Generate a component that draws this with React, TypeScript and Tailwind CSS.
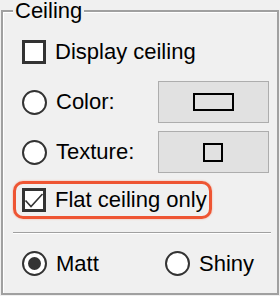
import React from 'react';

const font = "font-['Liberation_Sans',Arial,sans-serif]";

const CheckBox: React.FC<{ checked?: boolean }> = ({ checked }) => (
  <div className="relative w-[24px] h-[24px] shrink-0 border-[3px] border-[#333] bg-white">
    {checked && (
      <svg className="absolute left-[-3px] top-[-3px]" width="24" height="24" viewBox="0 0 24 24">
        <path d="M3.5 12.5 L9 18.5 L20.5 6" fill="none" stroke="#333" strokeWidth="1.6" />
      </svg>
    )}
  </div>
);

const Radio: React.FC<{ checked?: boolean }> = ({ checked }) => (
  <div className="w-[25px] h-[25px] shrink-0 rounded-full border-2 border-[#333] bg-white flex items-center justify-center">
    {checked && <div className="w-[13px] h-[13px] rounded-full bg-[#333]" />}
  </div>
);

const SwatchButton: React.FC<{ children: React.ReactNode }> = ({ children }) => (
  <div className="w-[111px] h-[42px] mr-[2px] bg-[#e1e1e1] border border-[#adadad] flex items-center justify-center">
    {children}
  </div>
);

export default function App() {
  return (
    <div className={`w-[280px] h-[296px] bg-[#f0f0f0] text-black ${font}`}>
      <fieldset className="ml-[1px] w-[278px] h-[295px] border-2 border-[#a0a0a0] shadow-[inset_1px_1px_0_#fff]">
        <legend className="ml-[10px] px-[2px] bg-[#f0f0f0] text-[22px] leading-[22px]">Ceiling</legend>
        <div className="pl-[10px] pr-[6px] flex flex-col text-[22px] leading-[24px]">
          <div className="mt-[18px] h-[24px] pl-[9px] flex items-center gap-[9px]">
            <CheckBox />
            <span>Display ceiling</span>
          </div>

          <div className="mt-[17px] h-[42px] pl-[9px] flex items-center">
            <div className="flex-1 flex items-center gap-[9px]">
              <Radio />
              <span>Color:</span>
            </div>
            <SwatchButton>
              <div className="w-[41px] h-[18px] border-2 border-black" />
            </SwatchButton>
          </div>

          <div className="mt-[8px] h-[42px] pl-[9px] flex items-center">
            <div className="flex-1 flex items-center gap-[9px]">
              <Radio />
              <span>Texture:</span>
            </div>
            <SwatchButton>
              <div className="w-[20px] h-[19px] border-2 border-black -ml-[2px]" />
            </SwatchButton>
          </div>

          <div className="mt-[8px] w-[199px] h-[38px] pl-[6px] flex items-center gap-[9px] border-[3px] border-[#ee5533] rounded-[10px] shadow-[0_0_2px_#f6a58c]">
            <CheckBox checked />
            <span>Flat ceiling only</span>
          </div>

          <div className="mt-[13px] h-px bg-[#a0a0a0] shadow-[0_1px_0_#fff]" />

          <div className="mt-[18px] h-[25px] pl-[9px] flex items-center">
            <div className="w-[143px] flex items-center gap-[9px]">
              <Radio checked />
              <span>Matt</span>
            </div>
            <div className="flex items-center gap-[9px]">
              <Radio />
              <span>Shiny</span>
            </div>
          </div>
        </div>
      </fieldset>
    </div>
  );
}
